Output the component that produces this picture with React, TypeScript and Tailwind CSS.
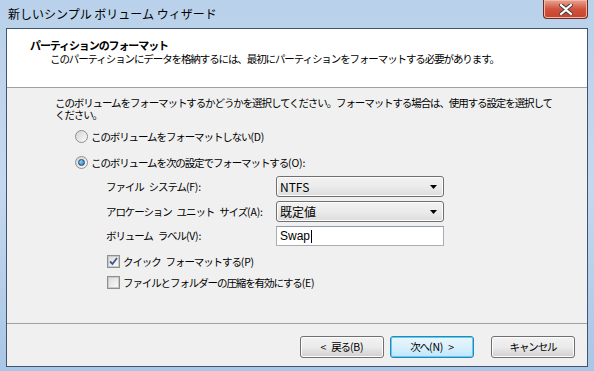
import React from "react";

const jp = "font-['Meiryo_UI','Noto_Sans_CJK_JP',sans-serif]";

// Japanese runs keep the tight tracking; ASCII runs (mnemonics, spaces) use normal spacing
function T({ s }: { s: string }) {
  const parts = s.split(/( |[\x21-\x7e]+)/).filter((p) => p !== "");
  return (
    <>
      {parts.map((p, i) => {
        if (p === " ") return <span key={i} className="inline-block w-[5px]" />;
        if (/^[\x21-\x7e]+$/.test(p))
          return (
            <span key={i} className="tracking-[-0.2px]">
              {p}
            </span>
          );
        return <span key={i}>{p}</span>;
      })}
    </>
  );
}

function Radio({ checked }: { checked?: boolean }) {
  return (
    <span className="flex h-[13px] w-[13px] shrink-0 items-center justify-center rounded-full border border-[#8e8f8f] bg-gradient-to-br from-[#d4d4d4] to-[#fbfbfb]">
      {checked && (
        <span className="h-[7px] w-[7px] rounded-full border border-[#1d4f7a] bg-[radial-gradient(circle_at_35%_35%,#8fd0f5,#1b6fb4)]" />
      )}
    </span>
  );
}

function Check({ checked }: { checked?: boolean }) {
  return (
    <span className="flex h-[13px] w-[13px] shrink-0 items-center justify-center border border-[#8e8f8f] bg-white">
      <span className="flex h-[11px] w-[11px] items-center justify-center border border-[#c9c9c9] bg-gradient-to-br from-[#dcdcdc] to-[#fafafa]">
        {checked && (
          <svg width="9" height="9" viewBox="0 0 9 9">
            <path d="M1 4.5 L3.5 7 L8 1" fill="none" stroke="#3b5a91" strokeWidth="1.8" />
          </svg>
        )}
      </span>
    </span>
  );
}

function Combo({ value }: { value: string }) {
  return (
    <div className="flex h-[21px] w-[168px] items-center justify-between rounded-[3px] border border-[#707070] bg-gradient-to-b from-[#f2f2f2] via-[#ebebeb] to-[#dddddd] pl-[3px] pr-[6px] shadow-[inset_0_0_0_1px_#fcfcfc]">
      <span className="text-[12px] leading-none tracking-normal">{value}</span>
      <svg width="7" height="4" viewBox="0 0 7 4">
        <path d="M0 0 H7 L3.5 4 Z" fill="#000" />
      </svg>
    </div>
  );
}

function Button({ label, focused }: { label: string; focused?: boolean }) {
  return (
    <div
      className={
        "flex h-[22px] w-[84px] items-center justify-center rounded-[3px] border " +
        (focused
          ? "border-[#3c7fb1] bg-gradient-to-b from-[#eaf6fd] via-[#d9f0fc] to-[#bee6fd] shadow-[inset_0_0_0_1px_#48d6fb]"
          : "border-[#707070] bg-gradient-to-b from-[#f2f2f2] via-[#ebebeb] to-[#cfcfcf] shadow-[inset_0_0_0_1px_#fcfcfc]")
      }
    >
      <span className="whitespace-nowrap">
        <T s={label} />
      </span>
    </div>
  );
}

export default function App() {
  return (
    <div
      className={
        "flex h-[371px] w-[594px] flex-col overflow-hidden bg-gradient-to-b from-[#b9d1ea] via-[#c4d9ef] to-[#a9c6e6] text-black " +
        jp
      }
    >
      {/* title bar */}
      <div className="flex h-[28px] shrink-0 items-start justify-between">
        <span className="pl-[8px] pt-[7px] text-[12px] leading-[14px]">
          新しいシンプル ボリューム ウィザード
        </span>
        <div className="mr-[6px] flex h-[19px] w-[45px] items-center justify-center rounded-b-[4px] border border-t-0 border-[#6b2b20] bg-gradient-to-b from-[#e8a493] via-[#d0533c] to-[#c9412a] shadow-[inset_0_0_0_1px_#f2b8a8]">
          <svg width="14" height="11" viewBox="0 0 14 11">
            <path
              d="M2 1 L7 5 L12 1 M2 10 L7 6 L12 10"
              fill="none"
              stroke="#3a3a3a"
              strokeWidth="4"
              strokeLinecap="square"
            />
            <path
              d="M2 1 L7 5 L12 1 M2 10 L7 6 L12 10"
              fill="none"
              stroke="#ffffff"
              strokeWidth="2.2"
              strokeLinecap="square"
            />
          </svg>
        </div>
      </div>

      {/* client area */}
      <div className="mx-[6px] flex h-[339px] shrink-0 flex-col border border-[#42546b] bg-[#f0f0f0] text-[10.5px] tracking-[-1.1px]">
        <div className="h-[59px] shrink-0 border-b border-[#a0a0a0] bg-white pl-[23px] pt-[9px]">
          <div className="text-[11px] font-bold leading-[14px] tracking-[-1.1px]">パーティションのフォーマット</div>
          <div className="whitespace-nowrap pl-[20px] leading-[14px]">
            このパーティションにデータを格納するには、最初にパーティションをフォーマットする必要があります。
          </div>
        </div>

        <div className="h-[235px] shrink-0 overflow-hidden pl-[48px] pr-[36px] pt-[9px]">
          <p className="whitespace-nowrap leading-[12px]">
            このボリュームをフォーマットするかどうかを選択してください。フォーマットする場合は、使用する設定を選択して
            <br />
            ください。
          </p>
          <div className="mt-[9px] flex flex-col gap-[13px] pl-[20px]">
            <label className="flex h-[13px] items-center gap-[3px]">
              <Radio />
              <span>
                <T s="このボリュームをフォーマットしない(D)" />
              </span>
            </label>
            <label className="flex h-[13px] items-center gap-[3px]">
              <Radio checked />
              <span>
                <T s="このボリュームを次の設定でフォーマットする(O):" />
              </span>
            </label>
          </div>
          <div className="mt-[7px] grid grid-cols-[170px_168px] items-center gap-y-[4px] pl-[51px]">
            <span className="whitespace-nowrap">
              <T s="ファイル システム(F):" />
            </span>
            <Combo value="NTFS" />
            <span className="whitespace-nowrap">
              <T s="アロケーション ユニット サイズ(A):" />
            </span>
            <Combo value="既定値" />
            <span className="whitespace-nowrap">
              <T s="ボリューム ラベル(V):" />
            </span>
            <div className="flex h-[20px] w-[168px] items-center border border-[#abadb3] border-t-[#8e9aa8] bg-white pl-[3px]">
              <span className="font-['Liberation_Sans',sans-serif] text-[12px] tracking-normal">Swap</span>
              <span className="ml-[1px] h-[13px] w-px bg-black" />
            </div>
          </div>
          <div className="mt-[9px] flex flex-col gap-[8px] pl-[52px]">
            <label className="flex h-[13px] items-center gap-[3px]">
              <Check checked />
              <span className="whitespace-nowrap">
                <T s="クイック フォーマットする(P)" />
              </span>
            </label>
            <label className="flex h-[13px] items-center gap-[3px]">
              <Check />
              <span className="whitespace-nowrap">
                <T s="ファイルとフォルダーの圧縮を有効にする(E)" />
              </span>
            </label>
          </div>
        </div>

        <div className="h-px shrink-0 bg-[#a0a0a0]" />
        <div className="flex flex-1 items-start justify-end pr-[12px] pt-[12px]">
          <Button label="< 戻る(B)" />
          <div className="ml-[6px] mr-[17px]">
            <Button label="次へ(N) >" focused />
          </div>
          <Button label="キャンセル" />
        </div>
      </div>
    </div>
  );
}
